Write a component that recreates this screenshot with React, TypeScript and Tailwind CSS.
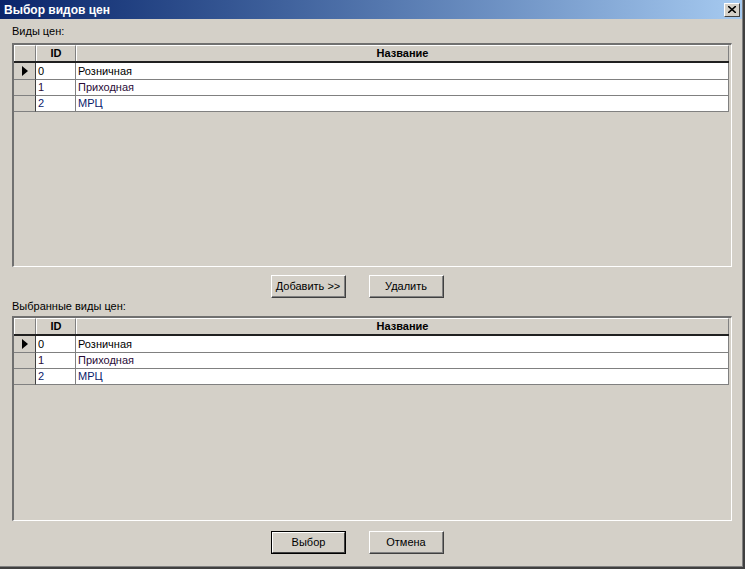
import React from "react";

const rows = [
  { id: "0", name: "Розничная", color: "text-black" },
  { id: "1", name: "Приходная", color: "text-[#2a0c38]" },
  { id: "2", name: "МРЦ", color: "text-[#0a1a6a]" },
];

function Triangle() {
  return (
    <svg width="6" height="10" viewBox="0 0 6 10">
      <path d="M0 0 L6 5 L0 10 Z" fill="#000" />
    </svg>
  );
}

function Grid({ height }: { height: string }) {
  return (
    <div
      className={`ml-[12px] mr-[10px] ${height} border-l-2 border-t-2 border-l-[#707070] border-t-[#707070] border-r border-b border-r-white border-b-white bg-[#d4d0c8] pr-[2px]`}
    >
      {/* header */}
      <div className="flex h-[18px] border-b-2 border-b-[#202020] text-[11px] font-bold">
        <div className="w-[22px] border-r border-r-[#808080] border-l border-l-white border-t border-t-white" />
        <div className="flex w-[40px] items-center justify-center border-r border-r-[#808080] border-l border-l-white border-t border-t-white">
          ID
        </div>
        <div className="flex flex-1 items-center justify-center border-r border-r-[#808080] border-l border-l-white border-t border-t-white">
          Название
        </div>
      </div>
      {rows.map((r, i) => (
        <div key={r.id} className={`flex ${i === 0 ? "h-[17px]" : "h-[16px]"} text-[11px]`}>
          <div className="flex w-[22px] items-center justify-center border-r border-b border-r-[#404040] border-b-[#808080]">
            {i === 0 && <Triangle />}
          </div>
          <div className={`flex w-[40px] items-center bg-white pl-[2px] border-r border-b border-r-[#808080] border-b-[#808080] ${r.color}`}>
            {r.id}
          </div>
          <div className={`flex flex-1 items-center bg-white pl-[2px] border-r border-b border-r-[#808080] border-b-[#808080] ${r.color}`}>
            {r.name}
          </div>
        </div>
      ))}
    </div>
  );
}

function Button({ label, isDefault }: { label: string; isDefault?: boolean }) {
  if (isDefault) {
    return (
      <div className="h-[23px] w-[75px] border border-black">
        <div className="flex h-full w-full items-center justify-center border-r border-b border-r-[#404040] border-b-[#404040] border-l border-t border-l-white border-t-white bg-[#d4d0c8] text-[11px]">
          {label}
        </div>
      </div>
    );
  }
  return (
    <div className="h-[23px] w-[75px] border-r border-b border-r-[#404040] border-b-[#404040] border-l border-t border-l-white border-t-white">
      <div className="flex h-full w-full items-center justify-center border-r border-b border-r-[#808080] border-b-[#808080] bg-[#d4d0c8] text-[11px]">
        {label}
      </div>
    </div>
  );
}

export default function App() {
  return (
    <div
      className="h-[569px] w-[745px] overflow-hidden bg-[#d4d0c8] text-black"
      style={{ fontFamily: '"Liberation Sans", Arial, sans-serif' }}
    >
      <div className="h-full w-full border-r-2 border-b-2 border-r-[#404040] border-b-[#404040]">
        <div className="h-full w-full border-r border-b border-r-[#808080] border-b-[#808080]">
          {/* title bar */}
          <div className="flex h-[19px] items-center justify-between bg-gradient-to-r from-[#0a246a] to-[#a6caf0] pl-[4px] pr-[2px]">
            <span className="text-[12px] font-bold text-white">Выбор видов цен</span>
            <div className="flex h-[14px] w-[16px] items-center justify-center border-r border-b border-r-[#404040] border-b-[#404040] border-l border-t border-l-white border-t-white bg-[#d4d0c8]">
              <svg width="8" height="7" viewBox="0 0 8 7">
                <path d="M0 0 L8 7 M8 0 L0 7" stroke="#000" strokeWidth="1.6" />
              </svg>
            </div>
          </div>

          <div className="ml-[12px] mt-[5px] h-[14px] text-[11px] leading-[14px]">Виды цен:</div>
          <div className="mt-[5px]">
            <Grid height="h-[224px]" />
          </div>

          <div className="ml-[271px] mt-[8px] flex gap-[23px]">
            <Button label="Добавить >>" />
            <Button label="Удалить" />
          </div>

          <div className="ml-[12px] mt-[1px] h-[14px] text-[11px] leading-[14px]">Выбранные виды цен:</div>
          <div className="mt-[3px]">
            <Grid height="h-[205px]" />
          </div>

          <div className="ml-[271px] mt-[10px] flex gap-[23px]">
            <Button label="Выбор" isDefault />
            <Button label="Отмена" />
          </div>
        </div>
      </div>
    </div>
  );
}
